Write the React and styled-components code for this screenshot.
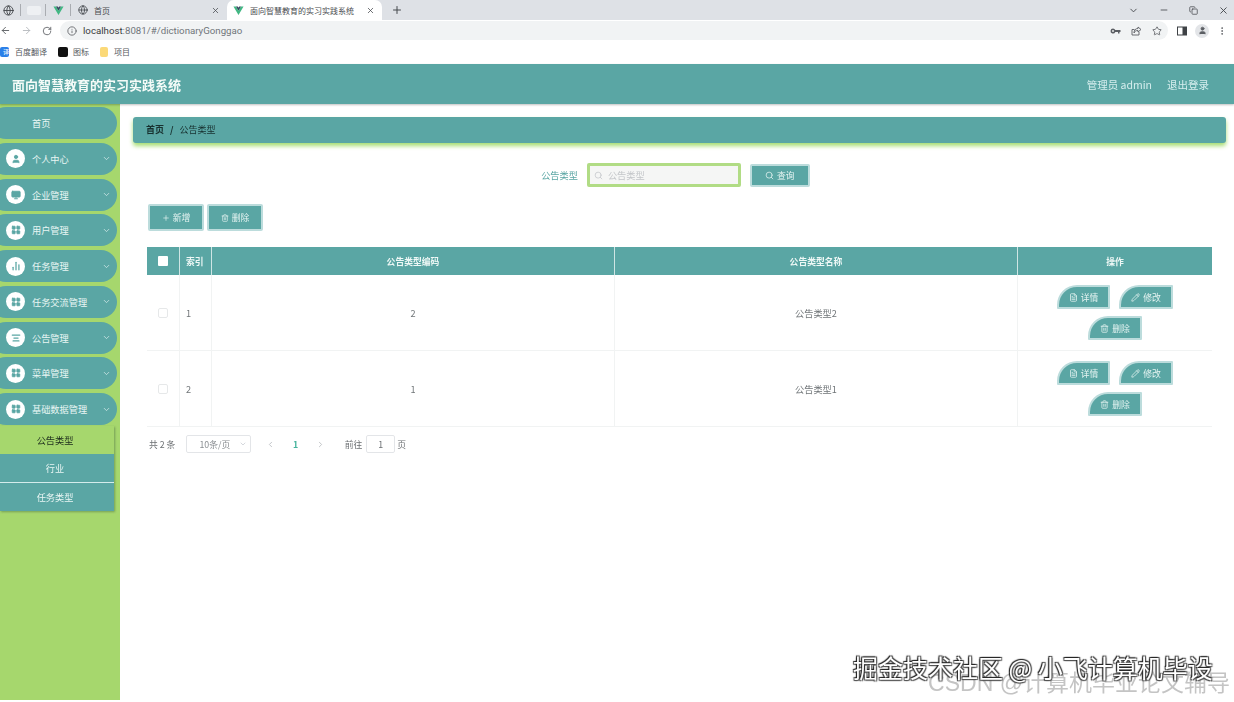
import React from 'react'
import styled, { createGlobalStyle } from 'styled-components'
import {
  ArrowLeft, ArrowRight, RotateCw, Info, Star, MoreVertical,
  ChevronDown, ChevronLeft, ChevronRight, Minus, Copy, X, Plus, Globe, Search, Trash2,
  FileText, Pencil, User, Monitor, LayoutGrid, BarChart2, AlignCenter,
} from 'lucide-react'

const GlobalStyle = createGlobalStyle`
  html, body { margin: 0; padding: 0; background: #fff; }
  body {
    width: 1234px;
    height: 702px;
    overflow: hidden;
    font-family: "Noto Sans CJK SC", "Noto Sans", sans-serif;
  }
  * { box-sizing: border-box; }
`

const TEAL = '#5aa6a4'
const GREEN = '#a6d76d'

const Page = styled.div`
  position: relative;
  width: 1234px;
  height: 702px;
  display: flex;
  flex-direction: column;
  overflow: hidden;
  filter: blur(0.5px);
`

/* browser chrome */
const TabStrip = styled.div`
  height: 20px;
  background: #dee1e6;
  display: flex;
  align-items: center;
  color: #45484d;
`
const TabSep = styled.span`
  width: 1px;
  height: 12px;
  background: #a9acb1;
  margin: ${p => p.$m};
`
const PinnedBlank = styled.span`
  width: 14px;
  height: 9px;
  background: #eef0f3;
  border-radius: 2px;
`
const TabText = styled.span`
  font-size: 8px;
  color: #4a4c50;
  flex: 1;
  white-space: nowrap;
`
const InactiveTab = styled.div`
  width: 143px;
  display: flex;
  align-items: center;
  gap: 6px;
  padding-right: 1px;
`
const ActiveTab = styled.div`
  width: 155px;
  height: 20px;
  margin-left: 6px;
  background: #fff;
  border-radius: 7px 7px 0 0;
  display: flex;
  align-items: center;
  gap: 6px;
  padding: 0 7px 0 6px;
`
const NewTab = styled.span`
  display: flex;
  margin-left: 9px;
`
const WindowControls = styled.div`
  margin-left: auto;
  display: flex;
  align-items: center;
  gap: 20px;
  padding-right: 5px;
`
const AddressBar = styled.div`
  height: 21px;
  background: #fff;
  display: flex;
  align-items: center;
  color: #5b5e63;
`
const NavIcons = styled.div`
  display: flex;
  align-items: center;
  gap: 10px;
  width: 60px;
`
const Omnibox = styled.div`
  width: 1108px;
  height: 19px;
  border-radius: 10px;
  background: #f1f3f4;
  display: flex;
  align-items: center;
  padding: 0 6px 0 7px;
  gap: 6px;
`
const Url = styled.span`
  font-family: "Roboto", sans-serif;
  font-size: 9.7px;
  color: #70757a;
  b { font-weight: 400; color: #3a3c40; }
`
const OmniIcons = styled.div`
  margin-left: auto;
  display: flex;
  align-items: center;
  gap: 10px;
`
const ToolIcons = styled.div`
  display: flex;
  align-items: center;
  margin-left: 9px;
  gap: 8px;
`
const Avatar = styled.span`
  width: 14px;
  height: 14px;
  border-radius: 50%;
  background: #e3e5e8;
  display: flex;
  align-items: center;
  justify-content: center;
`
const BookmarkBar = styled.div`
  height: 23px;
  padding-bottom: 2px;
  background: #fff;
  display: flex;
  align-items: center;
`
const Bookmark = styled.span`
  display: flex;
  align-items: center;
  gap: ${p => p.$inner}px;
  margin-right: ${p => p.$gap}px;
  font-size: 8px;
  color: #55585c;
`
const BookmarkIcon = styled.span`
  width: ${p => p.$w}px;
  height: 10px;
  border-radius: 2px;
  background: ${p => p.$bg};
  color: #fff;
  font-size: 6px;
  line-height: 10px;
  text-align: right;
`

/* app header */
const Header = styled.header`
  height: 40px;
  background: ${TEAL};
  box-shadow: 0 1px 2px rgba(0, 0, 0, 0.25);
  display: flex;
  align-items: center;
  padding: 0 25px 0 12px;
  color: #fff;
  z-index: 2;
`
const Title = styled.h1`
  margin: 0;
  font-size: 13px;
  font-weight: 700;
  color: #f4fbf8;
`
const HeaderRight = styled.div`
  margin-left: auto;
  display: flex;
  gap: 15px;
  font-size: 10.5px;
  color: #d6eeee;
`

const Body = styled.div`
  flex: 1;
  display: flex;
  min-height: 0;
  padding-bottom: 2px;
`

/* sidebar */
const Sidebar = styled.aside`
  width: 120px;
  background: ${GREEN};
  padding-top: 3px;
  display: flex;
  flex-direction: column;
  gap: 3.75px;
`
const MenuPill = styled.div`
  width: 127px;
  height: 32px;
  margin-left: -10px;
  border-radius: 16px;
  background: ${TEAL};
  display: flex;
  align-items: center;
  padding-left: 16px;
  font-size: 9.2px;
  color: #e9f6f4;
`
const MenuIcon = styled.span`
  width: 19px;
  height: 19px;
  border-radius: 50%;
  background: #fff;
  color: ${TEAL};
  display: flex;
  align-items: center;
  justify-content: center;
  margin-right: 7px;
`
const MenuLabel = styled.span`
  flex: 1;
  padding-left: ${p => (p.$plain ? 26 : 0)}px;
  white-space: nowrap;
`
const MenuArrow = styled.span`
  display: flex;
  margin-right: 6px;
  color: #d5ebe9;
`
const SubMenu = styled.div`
  width: 114px;
  margin-top: -3px;
  box-shadow: 1px 1px 2px rgba(60, 90, 60, 0.45);
`
const SubItem = styled.div`
  height: 28.5px;
  border-bottom: ${p => (p.$active ? 'none' : '1px solid #d4ecec')};
  background: ${p => (p.$active ? GREEN : TEAL)};
  color: ${p => (p.$active ? '#1c2b1c' : '#e9f6f4')};
  display: flex;
  align-items: center;
  justify-content: center;
  padding-right: 4px;
  font-size: 9.2px;
  &:last-child { border-bottom: none; }
`

/* main */
const Main = styled.main`
  flex: 1;
  padding: 13px 8px 0 13px;
  display: flex;
  flex-direction: column;
  min-width: 0;
`
const Breadcrumb = styled.div`
  height: 26px;
  border-radius: 3px;
  background: ${TEAL};
  box-shadow: 0 3px 4px rgba(150, 215, 90, 0.85);
  display: flex;
  align-items: center;
  gap: 6px;
  padding: 0 0 1px 13px;
  font-size: 9px;
  color: #17302f;
  b { font-weight: 700; }
`
const SearchRow = styled.div`
  margin-top: 20px;
  height: 24px;
  display: flex;
  align-items: center;
  justify-content: center;
  padding-right: 8px;
`
const SearchLabel = styled.span`
  font-size: 9.2px;
  color: ${TEAL};
  margin-right: 9px;
`
const SearchBox = styled.div`
  width: 154px;
  height: 24px;
  border: 3px solid #b1dc85;
  border-radius: 2px;
  background: #f5f6f5;
  display: flex;
  align-items: center;
  gap: 5px;
  padding-left: 4px;
  font-size: 9.2px;
  color: #c3c6c9;
  margin-right: 9px;
`
const Btn = styled.button`
  font-family: inherit;
  height: ${p => p.$h}px;
  width: ${p => p.$w}px;
  padding: 0;
  border: 2px solid #bcdcdc;
  border-radius: ${p => (p.$round ? '20px 1px 1px 1px' : '2px')};
  background: ${TEAL};
  color: #e6f4f2;
  font-size: 8.8px;
  display: inline-flex;
  align-items: center;
  justify-content: center;
  gap: 3px;
`
const Actions = styled.div`
  margin: 17px 0 0 15px;
  display: flex;
  gap: 3px;
`
const Table = styled.div`
  margin: 16px 0 0 14px;
  width: 1065px;
  display: grid;
  grid-template-columns: 33px 32px 403px 403px 194px;
`
const HeadCell = styled.div`
  height: 28px;
  background: ${TEAL};
  border-right: 1px solid #cfe5e4;
  color: #eef8f6;
  font-size: 8.8px;
  font-weight: 700;
  display: flex;
  align-items: center;
  justify-content: ${p => (p.$left ? 'flex-start' : 'center')};
  padding-left: ${p => (p.$left ? 6 : 0)}px;
  &:nth-child(5) { border-right: none; }
`
const Cell = styled.div`
  height: 76px;
  border-right: 1px solid #f1f3f3;
  border-bottom: 1px solid #f1f3f3;
  color: #707578;
  font-size: 9.2px;
  display: flex;
  align-items: center;
  justify-content: ${p => (p.$left ? 'flex-start' : 'center')};
  padding-left: ${p => (p.$left ? 6 : 0)}px;
`
const HeadCheck = styled.span`
  width: 10px;
  height: 10px;
  background: #fff;
  border-radius: 1px;
`
const RowCheck = styled.span`
  width: 10px;
  height: 10px;
  border: 1px solid #e6e8e9;
  border-radius: 2px;
`
const OpCell = styled(Cell)`
  border-right: none;
  padding: 0 39px;
  flex-wrap: wrap;
  align-content: center;
  gap: 7px 9px;
`
const Pager = styled.div`
  margin: 8px 0 0 16px;
  height: 18px;
  display: flex;
  align-items: center;
  font-size: 8.8px;
  color: #6c7073;
`
const PageSelect = styled.div`
  width: 65px;
  height: 18px;
  margin: 0 15px 0 11px;
  border: 1px solid #e3e5e8;
  border-radius: 2px;
  display: flex;
  align-items: center;
  justify-content: space-between;
  padding: 0 3px 0 12px;
  color: #8a8e92;
`
const PageNum = styled.span`
  margin: 0 17.5px;
  color: #45b39c;
  font-weight: 700;
`
const JumpLabel = styled.span`
  margin-left: 20px;
`
const PageInput = styled.span`
  width: 29px;
  height: 18px;
  margin: 0 2px 0 4px;
  border: 1px solid #e3e5e8;
  border-radius: 2px;
  display: flex;
  align-items: center;
  justify-content: center;
`

/* watermarks over the page */
const WatermarkBack = styled.div`
  position: absolute;
  right: 4px;
  top: 669px;
  font-size: 23px;
  line-height: 28px;
  color: rgba(190, 190, 190, 0.9);
  white-space: nowrap;
  font-family: "Liberation Sans", "Noto Sans CJK SC", sans-serif;
`
const WatermarkFront = styled.div`
  position: absolute;
  left: 853px;
  top: 652px;
  font-size: 25px;
  line-height: 30px;
  color: #fff;
  white-space: nowrap;
  text-shadow: -1px -1px 1px #222, 1px 1px 1px #555, 1px -1px 1px #444, -1px 1px 1px #444;
  font-family: "Noto Sans CJK SC", sans-serif;
`

const VueLogo = ({ size = 11 }) => (
  <svg width={size} height={size} viewBox="0 0 24 24">
    <path d="M1 3h5.500L12 12.500 17.500 3H23L12 22z" fill="#41b883" />
    <path d="M6.500 3h4L12 5.800 13.500 3h4L12 12.500z" fill="#35495e" />
  </svg>
)

const KeyGlyph = () => (
  <svg width="11" height="10" viewBox="0 0 22 20" fill="currentColor">
    <path d="M6 5a5 5 0 0 1 4.600 3H21v4h-2v3h-3v-3h-5.400A5 5 0 1 1 6 5z" />
    <circle cx="6" cy="10" r="1.800" fill="#f1f3f4" />
  </svg>
)

const ShareGlyph = () => (
  <svg width="11" height="10" viewBox="0 0 22 20" fill="none" stroke="currentColor" strokeWidth="1.800">
    <path d="M16 12v6H2V7h5" />
    <path d="M14 2l6 5-6 5V9c-4 0-6 1-8 5 0-6 3-9 8-9z" />
  </svg>
)

const PanelGlyph = () => (
  <svg width="10" height="10" viewBox="0 0 20 20">
    <rect x="1" y="2" width="18" height="16" fill="none" stroke="#3f4246" strokeWidth="2" />
    <rect x="11" y="2" width="8" height="16" fill="#3f4246" />
  </svg>
)

const menus = [
  { label: '个人中心', Icon: User },
  { label: '企业管理', Icon: Monitor },
  { label: '用户管理', Icon: LayoutGrid },
  { label: '任务管理', Icon: BarChart2 },
  { label: '任务交流管理', Icon: LayoutGrid },
  { label: '公告管理', Icon: AlignCenter },
  { label: '菜单管理', Icon: LayoutGrid },
  { label: '基础数据管理', Icon: LayoutGrid },
]

const rows = [
  { id: 1, code: 2, name: '公告类型2' },
  { id: 2, code: 1, name: '公告类型1' },
]

const App = () => (
  <Page>
    <GlobalStyle />
    <TabStrip>
      <Globe size={11} style={{ marginLeft: 3 }} />
      <TabSep $m="0 6px 0 6px" />
      <PinnedBlank />
      <TabSep $m="0 7px 0 4px" />
      <VueLogo />
      <TabSep $m="0 7px 0 6px" />
      <InactiveTab>
        <Globe size={10} />
        <TabText>首页</TabText>
        <X size={9} />
      </InactiveTab>
      <ActiveTab>
        <VueLogo />
        <TabText>面向智慧教育的实习实践系统</TabText>
        <X size={9} />
      </ActiveTab>
      <NewTab><Plus size={12} /></NewTab>
      <WindowControls>
        <ChevronDown size={11} />
        <Minus size={10} />
        <Copy size={9} />
        <X size={11} />
      </WindowControls>
    </TabStrip>
    <AddressBar>
      <NavIcons>
        <ArrowLeft size={11} />
        <ArrowRight size={11} color="#b6b9bd" />
        <RotateCw size={10} />
      </NavIcons>
      <Omnibox>
        <Info size={10} />
        <Url><b>localhost</b>:8081/#/dictionaryGonggao</Url>
        <OmniIcons>
          <KeyGlyph />
          <ShareGlyph />
          <Star size={10} />
        </OmniIcons>
      </Omnibox>
      <ToolIcons>
        <PanelGlyph />
        <Avatar><User size={9} fill="currentColor" /></Avatar>
        <MoreVertical size={10} />
      </ToolIcons>
    </AddressBar>
    <BookmarkBar>
      <Bookmark $gap={11} $inner={6}>
        <BookmarkIcon $w={9} $bg="#2a7fe8">译</BookmarkIcon>
        百度翻译
      </Bookmark>
      <Bookmark $gap={11} $inner={5}>
        <BookmarkIcon $w={10} $bg="#111" />
        图标
      </Bookmark>
      <Bookmark $gap={0} $inner={6}>
        <BookmarkIcon $w={8} $bg="#fbd978" />
        项目
      </Bookmark>
    </BookmarkBar>

    <Header>
      <Title>面向智慧教育的实习实践系统</Title>
      <HeaderRight>
        <span>管理员 admin</span>
        <span>退出登录</span>
      </HeaderRight>
    </Header>

    <Body>
      <Sidebar>
        <MenuPill>
          <MenuLabel $plain>首页</MenuLabel>
        </MenuPill>
        {menus.map(({ label, Icon }) => (
          <MenuPill key={label}>
            <MenuIcon><Icon size={10} fill="currentColor" strokeWidth={Icon === BarChart2 || Icon === AlignCenter ? 3 : 2} /></MenuIcon>
            <MenuLabel>{label}</MenuLabel>
            <MenuArrow><ChevronDown size={9} /></MenuArrow>
          </MenuPill>
        ))}
        <SubMenu>
          <SubItem $active>公告类型</SubItem>
          <SubItem>行业</SubItem>
          <SubItem>任务类型</SubItem>
        </SubMenu>
      </Sidebar>

      <Main>
        <Breadcrumb>
          <b>首页</b>
          <b>/</b>
          <span>公告类型</span>
        </Breadcrumb>

        <SearchRow>
          <SearchLabel>公告类型</SearchLabel>
          <SearchBox>
            <Search size={9} />
            公告类型
          </SearchBox>
          <Btn $w={60} $h={23}><Search size={9} /> 查询</Btn>
        </SearchRow>

        <Actions>
          <Btn $w={56} $h={27}><Plus size={8} /> 新增</Btn>
          <Btn $w={56} $h={27}><Trash2 size={8} /> 删除</Btn>
        </Actions>

        <Table>
          <HeadCell><HeadCheck /></HeadCell>
          <HeadCell $left>索引</HeadCell>
          <HeadCell>公告类型编码</HeadCell>
          <HeadCell>公告类型名称</HeadCell>
          <HeadCell>操作</HeadCell>
          {rows.map(r => (
            <React.Fragment key={r.id}>
              <Cell><RowCheck /></Cell>
              <Cell $left>{r.id}</Cell>
              <Cell>{r.code}</Cell>
              <Cell>{r.name}</Cell>
              <OpCell>
                <Btn $round $w={53} $h={24}><FileText size={9} /> 详情</Btn>
                <Btn $round $w={54} $h={24}><Pencil size={9} /> 修改</Btn>
                <Btn $round $w={54} $h={24}><Trash2 size={9} /> 删除</Btn>
              </OpCell>
            </React.Fragment>
          ))}
        </Table>

        <Pager>
          共 2 条
          <PageSelect>10条/页 <ChevronDown size={8} color="#c0c4cc" /></PageSelect>
          <ChevronLeft size={9} color="#b0b4b8" />
          <PageNum>1</PageNum>
          <ChevronRight size={9} color="#b0b4b8" />
          <JumpLabel>前往</JumpLabel>
          <PageInput>1</PageInput>
          页
        </Pager>
      </Main>
    </Body>

    <WatermarkBack>CSDN @计算机毕业论文辅导</WatermarkBack>
    <WatermarkFront>掘金技术社区 @ 小飞计算机毕设</WatermarkFront>
  </Page>
)

export default App
